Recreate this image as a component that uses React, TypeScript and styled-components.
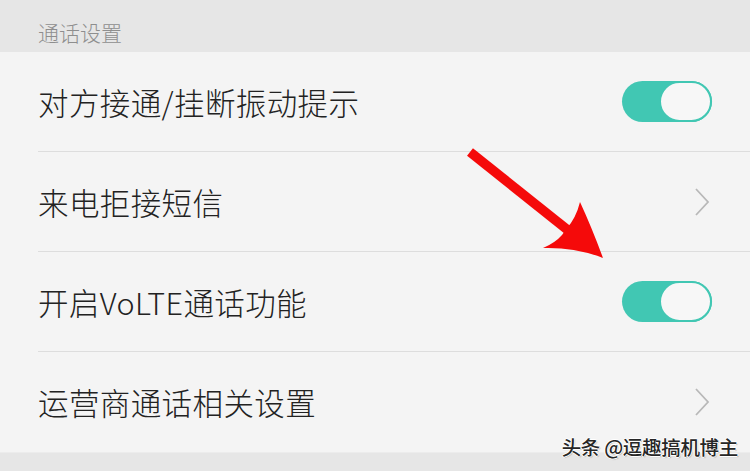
import React from "react";
import styled, { createGlobalStyle } from "styled-components";

const GlobalStyle = createGlobalStyle`
  html, body { margin: 0; padding: 0; background: #f4f4f4; }
  body { font-family: "Noto Sans CJK SC", "Noto Sans", sans-serif; }
`;

const Page = styled.div`
  position: relative;
  width: 750px;
  height: 471px;
  overflow: hidden;
  background: #f4f4f4;
  display: flex;
  flex-direction: column;
`;

const SectionHeader = styled.div`
  height: 52px;
  box-sizing: border-box;
  padding: 18px 0 0 38px;
  background: #e6e6e6;
  color: #8e8e8e;
  font-size: 21px;
  font-weight: 300;
  line-height: 28px;
`;

const List = styled.div`
  display: flex;
  flex-direction: column;
`;

const Row = styled.div`
  padding-left: 38px;
  background: #f4f4f4;
`;

const RowInner = styled.div<{ $last?: boolean }>`
  height: 100px;
  box-sizing: border-box;
  display: flex;
  align-items: center;
  justify-content: space-between;
  padding-right: 38px;
  border-bottom: ${(p) => (p.$last ? "none" : "1.5px solid #dddddd")};
`;

const Label = styled.span`
  font-size: 30.5px;
  font-weight: 300;
  color: #222222;
  line-height: 40px;
  letter-spacing: 0.4px;
`;

const Toggle = styled.div`
  width: 90px;
  height: 41px;
  border-radius: 21px;
  background: #41c7b3;
  display: flex;
  justify-content: flex-end;
  box-sizing: border-box;
`;

const Knob = styled.div`
  width: 53px;
  height: 41px;
  border-radius: 21px;
  box-sizing: border-box;
  border: 2px solid #41c7b3;
  background: #f7f7f7;
`;

const Footer = styled.div`
  flex: 1;
  background: #e6e6e6;
  border-top: 1px solid #ececec;
`;

const Watermark = styled.div`
  position: absolute;
  right: 12px;
  bottom: 12px;
  font-size: 19.5px;
  font-weight: 500;
  line-height: 24px;
  color: #262626;
  letter-spacing: -0.3px;
  text-shadow: 1px 0 0 #fff, -1px 0 0 #fff, 0 1px 0 #fff, 0 -1px 0 #fff,
    1px 1px 1px rgba(0, 0, 0, 0.3);
`;

const Overlay = styled.svg`
  position: absolute;
  left: 0;
  top: 0;
  pointer-events: none;
`;

const ChevronIcon = styled.svg`
  margin-right: 2px;
`;

const Chevron = () => (
  <ChevronIcon width="16" height="30" viewBox="0 0 16 30">
    <polyline
      points="2,2 14,15 2,28"
      fill="none"
      stroke="#b8b8b8"
      strokeWidth="1.8"
    />
  </ChevronIcon>
);

const Switch = () => (
  <Toggle>
    <Knob />
  </Toggle>
);

const rows: { label: string; type: "toggle" | "chevron" }[] = [
  { label: "对方接通/挂断振动提示", type: "toggle" },
  { label: "来电拒接短信", type: "chevron" },
  { label: "开启VoLTE通话功能", type: "toggle" },
  { label: "运营商通话相关设置", type: "chevron" },
];

export default function App() {
  return (
    <>
      <GlobalStyle />
      <Page>
        <SectionHeader>通话设置</SectionHeader>
        <List>
          {rows.map((r, i) => (
            <Row key={r.label}>
              <RowInner $last={i === rows.length - 1}>
                <Label>{r.label}</Label>
                {r.type === "toggle" ? <Switch /> : <Chevron />}
              </RowInner>
            </Row>
          ))}
        </List>
        <Footer />
        <Overlay width="750" height="471" viewBox="0 0 750 471">
          <line
            x1="470"
            y1="152"
            x2="574"
            y2="235"
            stroke="#f50a0a"
            strokeWidth="9.5"
          />
          <path
            d="M 603 258 Q 592 228 580 202 Q 576 218 567 228 L 562 235 Q 555 243 543 248 Q 575 247 603 258 Z"
            fill="#f50a0a"
          />
        </Overlay>
        <Watermark>头条 @逗趣搞机博主</Watermark>
      </Page>
    </>
  );
}
